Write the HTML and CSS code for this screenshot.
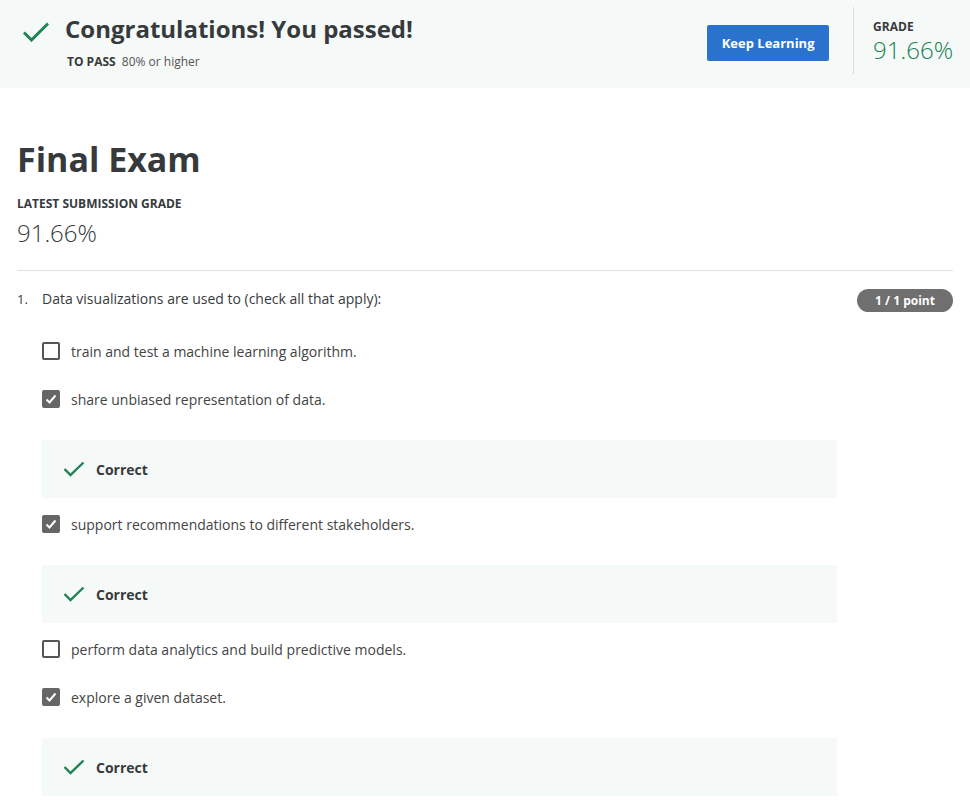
FILE: index.html
```html
<!DOCTYPE html>
<html>
<head>
<meta charset="utf-8">
<link rel="stylesheet" href="styles.css">
</head>
<body>
<header class="banner">
  <div class="banner-check">
    <svg width="28" height="20" viewBox="0 0 28 20"><path d="M2 10.5 L9.5 18 L26 1.5" fill="none" stroke="#1f8354" stroke-width="3"/></svg>
  </div>
  <div class="banner-text">
    <h2 class="banner-title">Congratulations! You passed!</h2>
    <div class="banner-sub"><span class="label">TO PASS</span> 80% or higher</div>
  </div>
  <button class="keep-btn">Keep Learning</button>
  <div class="divider"></div>
  <div class="grade-box">
    <div class="grade-label">GRADE</div>
    <div class="grade-value">91.66%</div>
  </div>
</header>

<main class="content">
  <h1 class="exam-title">Final Exam</h1>
  <div class="latest-label">LATEST SUBMISSION GRADE</div>
  <div class="latest-value">91.66%</div>
  <hr class="rule">

  <div class="question">
    <div class="q-head">
      <span class="q-num">1.</span>
      <span class="q-text">Data visualizations are used to (check all that apply):</span>
      <span class="badge">1 / 1 point</span>
    </div>
    <div class="options">
      <div class="option"><span class="box"></span>train and test a machine learning algorithm.</div>
      <div class="option"><span class="box checked"><svg width="14" height="14" viewBox="0 0 14 14"><path d="M2.5 7.5 L5.5 10.5 L11.5 3.5" fill="none" stroke="#fff" stroke-width="2"/></svg></span>share unbiased representation of data.</div>
      <div class="feedback"><svg width="22" height="16" viewBox="0 0 22 16"><path d="M1.5 8 L7.5 14 L20.5 1.5" fill="none" stroke="#1f8354" stroke-width="2.4"/></svg><span>Correct</span></div>
      <div class="option"><span class="box checked"><svg width="14" height="14" viewBox="0 0 14 14"><path d="M2.5 7.5 L5.5 10.5 L11.5 3.5" fill="none" stroke="#fff" stroke-width="2"/></svg></span>support recommendations to different stakeholders.</div>
      <div class="feedback"><svg width="22" height="16" viewBox="0 0 22 16"><path d="M1.5 8 L7.5 14 L20.5 1.5" fill="none" stroke="#1f8354" stroke-width="2.4"/></svg><span>Correct</span></div>
      <div class="option"><span class="box"></span>perform data analytics and build predictive models.</div>
      <div class="option"><span class="box checked"><svg width="14" height="14" viewBox="0 0 14 14"><path d="M2.5 7.5 L5.5 10.5 L11.5 3.5" fill="none" stroke="#fff" stroke-width="2"/></svg></span>explore a given dataset.</div>
      <div class="feedback"><svg width="22" height="16" viewBox="0 0 22 16"><path d="M1.5 8 L7.5 14 L20.5 1.5" fill="none" stroke="#1f8354" stroke-width="2.4"/></svg><span>Correct</span></div>
    </div>
  </div>
</main>
</body>
</html>
```

FILE: styles.css
```css
* { box-sizing: border-box; }
body {
  margin: 0;
  font-family: "Open Sans", "Liberation Sans", sans-serif;
  color: #373a3c;
  background: #fff;
  overflow: hidden;
}
.banner {
  display: flex;
  align-items: flex-start;
  height: 88px;
  background: #f5f9f8;
  padding: 0 17px 0 22px;
}
.banner-check {
  width: 43px;
  padding-top: 22px;
}
.banner-text { flex: 1; padding-top: 12px; }
.banner-title {
  margin: 0;
  font-size: 24px;
  font-weight: 700;
  line-height: 34px;
  color: #373a3c;
}
.banner-sub {
  margin-top: 8px;
  margin-left: 2px;
  font-size: 12px;
  line-height: 16px;
  color: #555;
}
.banner-sub .label { font-weight: 700; color: #373a3c; margin-right: 3px; }
.keep-btn {
  margin-top: 25px;
  width: 122px;
  height: 36px;
  border: none;
  border-radius: 2px;
  background: #2a73cc;
  color: #fff;
  font-family: "Open Sans", "Liberation Sans", sans-serif;
  font-size: 13px;
  font-weight: 700;
  padding: 0;
}
.divider {
  width: 1px;
  height: 67px;
  margin: 7px 19px 0 24px;
  background: #d9dcdc;
}
.grade-box { padding-top: 20px; }
.grade-label {
  font-size: 12px;
  font-weight: 700;
  line-height: 14px;
  color: #373a3c;
}
.grade-value {
  margin-top: 2px;
  font-size: 24px;
  line-height: 28px;
  font-weight: 300;
  color: #1a8050;
}
.content { padding: 0 17px; }
.exam-title {
  margin: 48px 0 0;
  font-size: 34px;
  font-weight: 700;
  line-height: 46px;
  color: #373a3c;
}
.latest-label {
  margin-top: 13px;
  font-size: 12px;
  font-weight: 700;
  line-height: 18px;
}
.latest-value {
  margin-top: 5px;
  font-size: 24px;
  line-height: 30px;
  font-weight: 300;
}
.rule {
  margin: 22px 0 0;
  border: none;
  border-top: 1px solid #e1e1e1;
}
.q-head {
  display: flex;
  align-items: center;
  height: 56px;
  font-size: 14px;
  line-height: 20px;
}
.q-num { width: 25px; font-size: 13px; }
.q-text { flex: 1; }
.badge {
  background: #6f6f6f;
  color: #fff;
  font-size: 12px;
  font-weight: 700;
  line-height: 23px;
  height: 23px;
  width: 96px;
  text-align: center;
  border-radius: 12px;
  margin-top: 2px;
}
.options { margin-left: 25px; width: 795px; }
.option {
  display: flex;
  align-items: center;
  height: 48px;
  font-size: 14px;
  color: #444;
}
.box {
  width: 18px;
  height: 18px;
  border: 2px solid #555;
  border-radius: 2px;
  margin-right: 11px;
  display: flex;
  align-items: center;
  justify-content: center;
}
.box.checked { background: #666; border-color: #666; }
.feedback {
  display: flex;
  align-items: center;
  height: 58px;
  margin: 17px 0 2px;
  padding-left: 21px;
  background: #f5f9f8;
  font-size: 14px;
  font-weight: 700;
  color: #373a3c;
}
.feedback svg { margin-right: 11px; }
```
